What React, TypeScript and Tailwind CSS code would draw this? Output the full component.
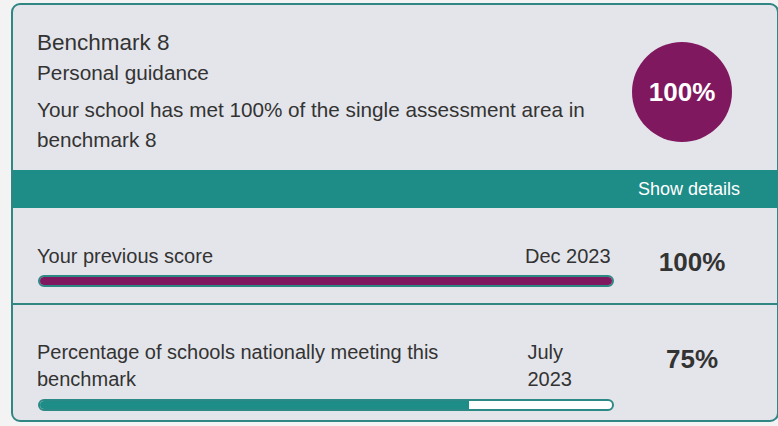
import React from "react";

const font = { fontFamily: '"Liberation Sans", Arial, sans-serif' };

function Bar({ pct, fill }: { pct: number; fill: string }) {
  return (
    <div className="h-[12px] w-full rounded-full border-2 border-[#2c8985] bg-white overflow-hidden">
      <div className={`h-full ${fill}`} style={{ width: `${pct}%` }} />
    </div>
  );
}

export default function App() {
  return (
    <div className="min-h-[426px] w-[778px] overflow-hidden bg-[#f3f3f4] pt-[3px]" style={font}>
      <div className="ml-[11px] w-[768px] overflow-hidden rounded-[9px] border-2 border-[#2f8683] bg-[#e4e5ea] text-[#333333]">
        {/* Header */}
        <div className="flex items-start">
          <div className="flex-1 pl-[24px] pt-[23px] pb-[15px]">
            <div className="text-[22.5px] leading-[30px]">Benchmark 8</div>
            <div className="text-[20.75px] leading-[30px]">Personal guidance</div>
            <p className="mt-[7px] w-[562px] text-[20.7px] leading-[30px]">
              Your school has met 100% of the single assessment area in benchmark 8
            </p>
          </div>
          <div className="mr-[45px] mt-[37px] flex h-[100px] w-[100px] items-center justify-center rounded-full bg-[#80185f]">
            <span className="text-[26px] font-bold leading-none text-white">100%</span>
          </div>
        </div>

        {/* Band */}
        <div className="flex h-[38px] items-center justify-end bg-[#1e8c87] pr-[37px]">
          <span className="text-[18px] leading-none text-white">Show details</span>
        </div>

        {/* Row 1 */}
        <div className="flex border-b-2 border-[#2f8683] pl-[24px] pt-[35px] pb-[16px]">
          <div className="w-[577px]">
            <div className="flex text-[20px] leading-[27px]">
              <div className="flex-1">Your previous score</div>
              <div className="w-[89px] pr-[2px]">Dec 2023</div>
            </div>
            <div className="mt-[5px] pl-px">
              <Bar pct={100} fill="bg-[#80185f]" />
            </div>
          </div>
          <div className="flex-1 pr-[7px] pt-[4px] text-center text-[26px] font-bold leading-[30px]">100%</div>
        </div>

        {/* Row 2 */}
        <div className="flex pl-[24px] pt-[34px] pb-[9px]">
          <div className="w-[577px]">
            <div className="flex text-[20px] leading-[27px]">
              <div className="flex-1 pr-[40px]">Percentage of schools nationally meeting this benchmark</div>
              <div className="w-[86.5px] pr-[3px]">July 2023</div>
            </div>
            <div className="mt-[6px] pl-px">
              <Bar pct={75} fill="bg-[#1e8c87]" />
            </div>
          </div>
          <div className="flex-1 pr-[7px] pt-[5px] text-center text-[26px] font-bold leading-[30px]">75%</div>
        </div>
      </div>
    </div>
  );
}
